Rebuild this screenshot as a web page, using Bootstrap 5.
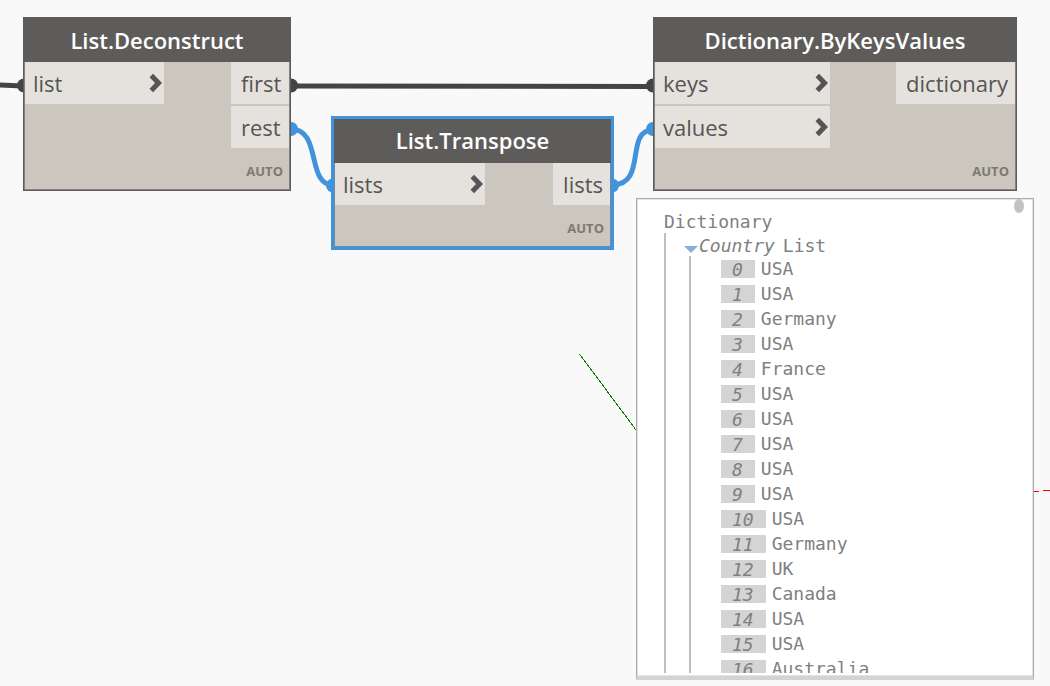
<!DOCTYPE html>
<html lang="en">
<head>
<meta charset="utf-8">
<meta name="viewport" content="width=device-width, initial-scale=1">
<title>Graph workspace</title>
<link href="https://cdn.jsdelivr.net/npm/bootstrap@5.3.0/dist/css/bootstrap.min.css" rel="stylesheet">
<style>
  body { background: #f9f9f9; font-family: "Open Sans", sans-serif; color: #555; }
  .workspace { min-height: 100vh; }
  .wires { inset: 0; pointer-events: none; }

  /* Graph nodes, placed on the free canvas */
  .graph-node { background: #cbc6be; border: 1px solid #5c5b59; box-shadow: inset 0 0 0 1px #85827e; padding: 0 1px 1px; }
  .graph-node.selected { border: 3px solid #4193db; box-shadow: inset 0 0 0 1px #6c8aa5; }
  .node-deconstruct { left: 23px; top: 17px; width: 268px; }
  .node-transpose { left: 331px; top: 116px; width: 283px; }
  .node-dictionary { left: 653px; top: 17px; width: 364px; }
  .node-title { background: #5d5c5a; color: #fff; font-size: 22px; font-weight: 600; line-height: 44px; margin: 0 -1px; }
  .selected .node-title { line-height: 42px; padding-bottom: 2px; }
  .ports { gap: 2px; }
  .port { background: #e5e2dd; font-size: 22px; line-height: 42px; height: 42px; padding: 0 8px; }
  .port-out { padding-left: 10px; padding-right: 7px; }
  .inputs { width: 139px; }
  .node-transpose .inputs { width: 150px; }
  .node-dictionary .inputs { width: 175px; }
  .node-deconstruct .outputs { width: 58px; }
  .level-btn { width: 13px; height: 20px; margin-right: -6px; }
  .lacing { color: #7c7973; font-size: 13px; font-weight: 700; line-height: 36px; padding-right: 6px; padding-top: 5px; height: 41px; }

  /* Output preview */
  .preview { left: 636px; top: 198px; width: 398px; height: 482px; background: #fff; border: 1px solid #a9a9a9; border-bottom: 4px solid #d3d3d3; box-shadow: inset 0 0 0 1px #e4e4e4; color: #808080; font-family: "DejaVu Sans Mono", monospace; font-size: 18px; line-height: 25px; }
  .tree { height: 464px; margin: 10px 10px 0 27px; }
  .branch { border-left: 2px solid #c0c0c0; }
  .branch-root { height: 460px; padding-left: 18px; margin-top: -1px; }
  .branch-list { height: 440px; padding-left: 30px; margin-left: 5px; margin-top: -2px; }
  .twisty { width: 14px; height: 7px; margin-right: 1px; }
  .idx { background: #d4d4d4; height: 18px; line-height: 20px; padding: 0 12px 0 11px; margin-right: 6px; }
  .thumb { top: 0; right: 9px; width: 10px; height: 14px; border-radius: 50%; background: #c2c2c2; }
</style>
</head>
<body>
<main class="workspace position-relative overflow-hidden">
  <svg class="wires position-absolute w-100 h-100" aria-hidden="true">
    <path d="M579.500 354L636 430" stroke="#008000" stroke-width="1" shape-rendering="crispEdges"/>
    <path d="M1034 491.500H1039M1043 490.500H1050" stroke="#f00" stroke-width="1"/>
    <g fill="none" stroke-width="5">
      <path d="M0 85L23 86M291 86L653 86.500" stroke="#444"/>
      <path d="M291 129C322 129 306 185 333 185M612 185C648 185 624 130 653 130" stroke="#4193db"/>
    </g>
    <g fill="#444"><circle cx="24" cy="85.500" r="7"/><circle cx="291" cy="85.500" r="7"/><circle cx="653" cy="85.500" r="7"/></g>
    <g fill="#4193db"><circle cx="291" cy="129" r="7"/><circle cx="333" cy="185.500" r="7"/><circle cx="612" cy="185.500" r="7"/><circle cx="653" cy="129" r="7"/></g>
    <symbol id="chevron" viewBox="0 0 13 20"><path d="M2.300 2.600L9.500 10L2.300 17.400" fill="none" stroke="#555" stroke-width="5"/></symbol>
  </svg>

  <section class="graph-node node-deconstruct position-absolute">
    <h2 class="node-title text-center">List.Deconstruct</h2>
    <div class="d-flex justify-content-between align-items-start">
      <div class="inputs ports d-flex flex-column">
        <div class="port d-flex align-items-center justify-content-between">list
          <button class="level-btn btn p-0 border-0 d-flex" aria-label="list levels"><svg width="13" height="20"><use href="#chevron"/></svg></button></div>
      </div>
      <div class="outputs ports d-flex flex-column">
        <div class="port port-out">first</div>
        <div class="port port-out">rest</div>
      </div>
    </div>
    <div class="lacing d-flex align-items-center justify-content-end">AUTO</div>
  </section>

  <section class="graph-node selected node-transpose position-absolute">
    <h2 class="node-title text-center">List.Transpose</h2>
    <div class="d-flex justify-content-between align-items-start">
      <div class="inputs ports d-flex flex-column">
        <div class="port d-flex align-items-center justify-content-between">lists
          <button class="level-btn btn p-0 border-0 d-flex" aria-label="lists levels"><svg width="13" height="20"><use href="#chevron"/></svg></button></div>
      </div>
      <div class="outputs ports d-flex flex-column">
        <div class="port port-out">lists</div>
      </div>
    </div>
    <div class="lacing d-flex align-items-center justify-content-end">AUTO</div>
  </section>

  <section class="graph-node node-dictionary position-absolute">
    <h2 class="node-title text-center">Dictionary.ByKeysValues</h2>
    <div class="d-flex justify-content-between align-items-start">
      <div class="inputs ports d-flex flex-column">
        <div class="port d-flex align-items-center justify-content-between">keys
          <button class="level-btn btn p-0 border-0 d-flex" aria-label="keys levels"><svg width="13" height="20"><use href="#chevron"/></svg></button></div>
        <div class="port d-flex align-items-center justify-content-between">values
          <button class="level-btn btn p-0 border-0 d-flex" aria-label="values levels"><svg width="13" height="20"><use href="#chevron"/></svg></button></div>
      </div>
      <div class="outputs ports d-flex flex-column">
        <div class="port port-out">dictionary</div>
      </div>
    </div>
    <div class="lacing d-flex align-items-center justify-content-end">AUTO</div>
  </section>

  <section class="preview position-absolute">
    <div class="thumb position-absolute"></div>
    <div class="tree overflow-hidden">
      <div>Dictionary</div>
      <div class="branch branch-root">
        <div class="d-flex align-items-center">
          <button class="btn p-0 border-0 d-flex pt-2" aria-label="Collapse Country"><svg class="twisty" viewBox="0 0 14 7"><path d="M0 0H14L7 7Z" fill="#84b1da"/></svg></button>
          <em class="me-2">Country</em><span>List</span>
        </div>
        <div class="branch branch-list">
          <div class="d-flex align-items-center"><em class="idx">0</em>USA</div>
          <div class="d-flex align-items-center"><em class="idx">1</em>USA</div>
          <div class="d-flex align-items-center"><em class="idx">2</em>Germany</div>
          <div class="d-flex align-items-center"><em class="idx">3</em>USA</div>
          <div class="d-flex align-items-center"><em class="idx">4</em>France</div>
          <div class="d-flex align-items-center"><em class="idx">5</em>USA</div>
          <div class="d-flex align-items-center"><em class="idx">6</em>USA</div>
          <div class="d-flex align-items-center"><em class="idx">7</em>USA</div>
          <div class="d-flex align-items-center"><em class="idx">8</em>USA</div>
          <div class="d-flex align-items-center"><em class="idx">9</em>USA</div>
          <div class="d-flex align-items-center"><em class="idx">10</em>USA</div>
          <div class="d-flex align-items-center"><em class="idx">11</em>Germany</div>
          <div class="d-flex align-items-center"><em class="idx">12</em>UK</div>
          <div class="d-flex align-items-center"><em class="idx">13</em>Canada</div>
          <div class="d-flex align-items-center"><em class="idx">14</em>USA</div>
          <div class="d-flex align-items-center"><em class="idx">15</em>USA</div>
          <div class="d-flex align-items-center"><em class="idx">16</em>Australia</div>
        </div>
      </div>
    </div>
  </section>
</main>
<script src="https://cdn.jsdelivr.net/npm/bootstrap@5.3.0/dist/js/bootstrap.bundle.min.js"></script>
</body>
</html>
